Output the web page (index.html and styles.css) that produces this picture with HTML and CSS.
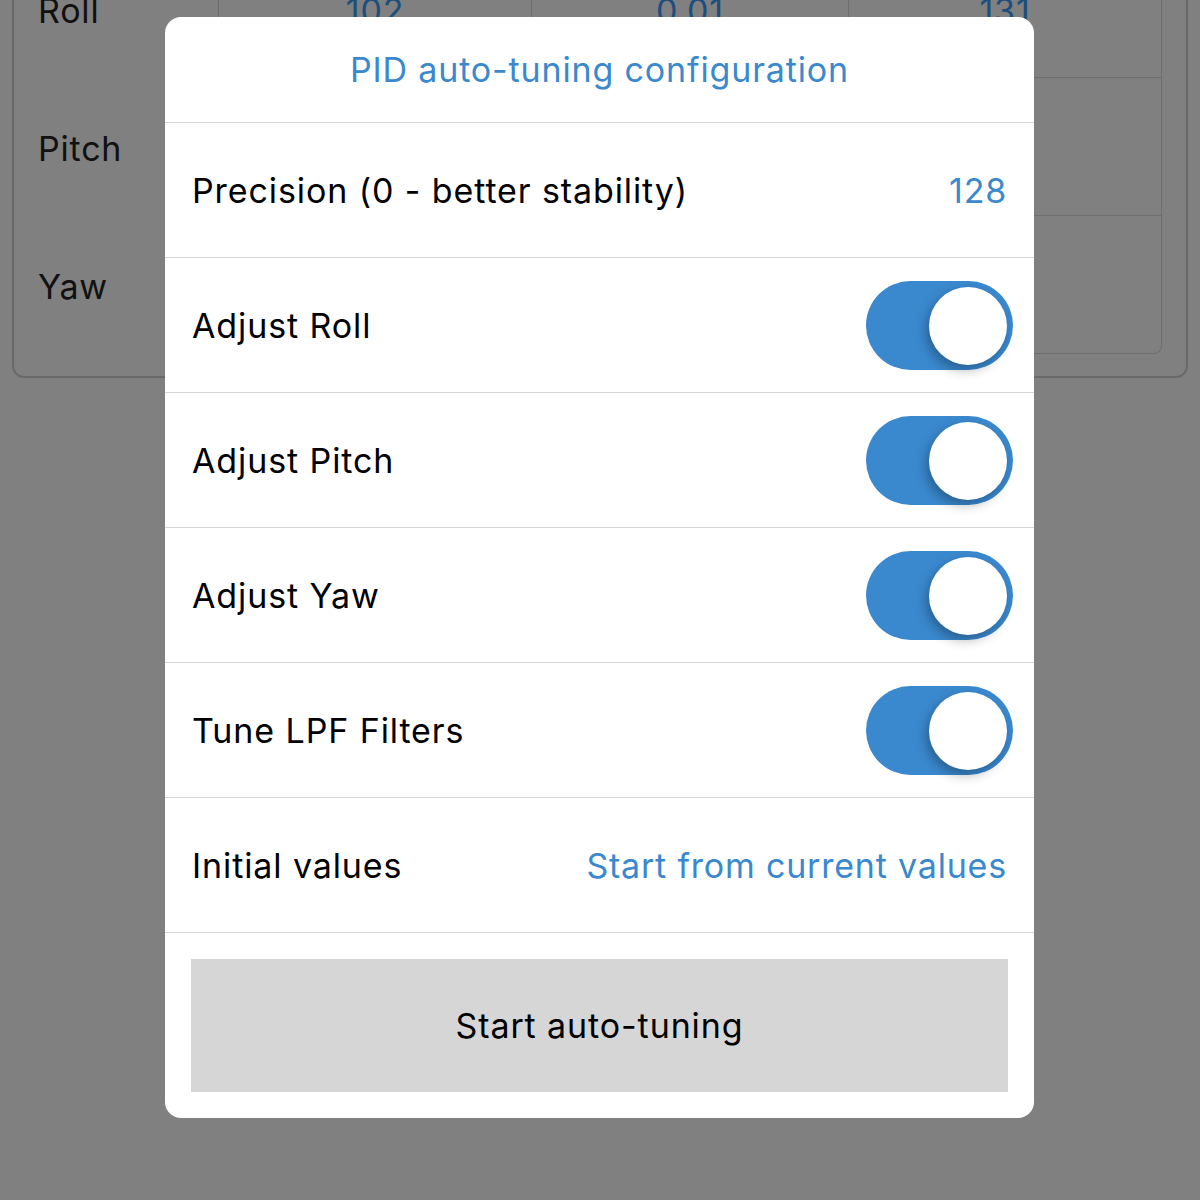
FILE: index.html
```html
<!DOCTYPE html>
<html lang="en">
<head>
<meta charset="utf-8">
<title>PID auto-tuning configuration</title>
<link rel="stylesheet" href="styles.css">
</head>
<body>
<div class="page">
  <div class="card">
    <div class="labels">
      <div class="label-row">Roll</div>
      <div class="label-row">Pitch</div>
      <div class="label-row">Yaw</div>
    </div>
    <div class="table">
      <div class="cell">102</div>
      <div class="cell">0.01</div>
      <div class="cell">131</div>
      <div class="cell"></div>
      <div class="cell"></div>
      <div class="cell"></div>
      <div class="cell last"></div>
      <div class="cell last"></div>
      <div class="cell last"></div>
    </div>
  </div>
</div>

<div class="modal">
  <div class="modal-title">PID auto-tuning configuration</div>
  <div class="row">
    <span class="row-label">Precision (0 - better stability)</span>
    <span class="row-value">128</span>
  </div>
  <div class="row">
    <span class="row-label">Adjust Roll</span>
    <span class="switch"><span class="knob"></span></span>
  </div>
  <div class="row">
    <span class="row-label">Adjust Pitch</span>
    <span class="switch"><span class="knob"></span></span>
  </div>
  <div class="row">
    <span class="row-label">Adjust Yaw</span>
    <span class="switch"><span class="knob"></span></span>
  </div>
  <div class="row">
    <span class="row-label">Tune LPF Filters</span>
    <span class="switch"><span class="knob"></span></span>
  </div>
  <div class="row">
    <span class="row-label">Initial values</span>
    <span class="row-value">Start from current values</span>
  </div>
  <div class="actions">
    <button class="start-btn">Start auto-tuning</button>
  </div>
</div>
</body>
</html>
```

FILE: styles.css
```css
* { box-sizing: border-box; }

html, body {
  margin: 0;
  padding: 0;
  width: 1200px;
  height: 1200px;
  overflow: hidden;
  background: #808080;
  font-family: Inter, "Noto Sans", "Liberation Sans", sans-serif;
}

.page {
  padding: 0 12px;
}

.card {
  margin-top: -62px;
  border: 2px solid #696969;
  border-top: none;
  border-radius: 0 0 12px 12px;
  display: flex;
  align-items: flex-start;
  padding: 0 24px 22px 0;
}

.labels {
  width: 204px;
  flex: none;
}

.label-row {
  height: 138px;
  display: flex;
  align-items: center;
  padding: 6px 0 0 24px;
  font-size: 34px;
  letter-spacing: 0.8px;
  color: #111;
}

.table {
  flex: 1;
  display: grid;
  grid-template-columns: 313px 317px 1fr;
  border: 1px solid #6e6e6e;
  border-top: none;
  border-radius: 0 0 8px 8px;
  margin-top: 2px;
}

.cell {
  height: 138px;
  border-bottom: 1px solid #6e6e6e;
  border-right: 1px solid #6e6e6e;
  display: flex;
  align-items: center;
  justify-content: center;
  font-size: 34px;
  letter-spacing: 0.8px;
  color: #1c4e7e;
  padding-top: 3px;
}

.cell:nth-child(3n) { border-right: none; }
.cell.last { border-bottom: none; height: 137px; }

.modal {
  position: absolute;
  left: 165px;
  top: 17px;
  width: 869px;
  background: #fff;
  border-radius: 16px;
  overflow: hidden;
}

.modal-title {
  height: 106px;
  display: flex;
  align-items: center;
  justify-content: center;
  color: #3a89cf;
  font-size: 34px;
  letter-spacing: 0.85px;
  border-bottom: 1px solid #d6d6d6;
}

.row {
  height: 135px;
  display: flex;
  align-items: center;
  justify-content: space-between;
  padding: 0 27px;
  border-bottom: 1px solid #d6d6d6;
  font-size: 34px;
  letter-spacing: 0.9px;
}

.row-label { color: #000; }
.row-value { color: #3a89cf; letter-spacing: 0.8px; }

.switch {
  position: relative;
  width: 147px;
  height: 89px;
  border-radius: 45px;
  background: #3a89cf;
  margin-right: -6px;
  flex: none;
}

.knob {
  position: absolute;
  right: 6px;
  top: 6px;
  width: 78px;
  height: 78px;
  border-radius: 50%;
  background: #fff;
  box-shadow: -3px 5px 12px rgba(0, 0, 0, 0.3);
}

.actions {
  padding: 26px;
}

.start-btn {
  display: block;
  width: 100%;
  height: 133px;
  border: none;
  border-radius: 0;
  background: #d6d6d6;
  color: #000;
  font-family: inherit;
  font-size: 34px;
  letter-spacing: 0.9px;
  padding: 0;
}
```
